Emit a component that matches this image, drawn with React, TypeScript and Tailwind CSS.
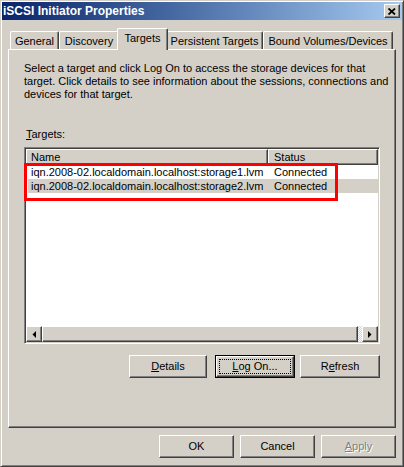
import React from "react";

const font = "font-['Liberation_Sans',Arial,sans-serif] text-[11px] leading-[13px] text-black";
const raised =
  "border border-t-white border-l-white border-r-[#404040] border-b-[#404040] shadow-[inset_-1px_-1px_#808080] bg-[#d4d0c8]";

const Btn = ({ children, className = "", disabled = false, def = false }: { children: React.ReactNode; className?: string; disabled?: boolean; def?: boolean }) => {
  if (def) {
    return (
      <div className={`h-[23px] border border-black ${className}`}>
        <div className={`${raised} h-full flex items-center justify-center p-[2px]`}>
          <div className="h-full w-full border border-dotted border-black flex items-center justify-center">{children}</div>
        </div>
      </div>
    );
  }
  return (
    <div
      className={`${raised} h-[23px] flex items-center justify-center ${disabled ? "text-[#808080] [text-shadow:1px_1px_0_#fff]" : ""} ${className}`}
    >
      {children}
    </div>
  );
};

const Tab = ({ label, width, active = false }: { label: string; width: string; active?: boolean }) => (
  <div
    className={`${width} flex justify-center border-t border-l border-t-white border-l-white border-r border-r-[#404040] rounded-t-[2px] shadow-[inset_-1px_0_#808080] bg-[#d4d0c8] ${
      active ? "h-[22px] -mx-[2px] -mb-[1px] z-10 pt-[3px]" : "h-[18px] pt-[3px]"
    }`}
  >
    {label}
  </div>
);

const Arrow = ({ dir }: { dir: "left" | "right" }) => (
  <div className={`${raised} w-[16px] h-[16px] flex items-center justify-center`}>
    <svg width="4" height="7" viewBox="0 0 4 7">
      {dir === "left" ? <polygon points="4,0 4,7 0.5,3.5" fill="#000" /> : <polygon points="0,0 0,7 3.5,3.5" fill="#000" />}
    </svg>
  </div>
);

export default function App() {
  return (
    <div
      className={`${font} w-[404px] h-[467px] bg-[#d4d0c8] border border-t-[#d4d0c8] border-l-[#d4d0c8] border-r-[#404040] border-b-[#404040] shadow-[inset_1px_1px_#fff,inset_-1px_-1px_#808080] p-[1px] flex flex-col`}
    >
      {/* title bar */}
      <div className="h-[18px] shrink-0 bg-gradient-to-r from-[#0a246a] to-[#a6caf0] flex items-center justify-between pl-[1px] pr-[2px]">
        <span className="font-bold text-white text-[12px] leading-[14px]">iSCSI Initiator Properties</span>
        <div className={`${raised} w-[16px] h-[14px] flex items-center justify-center`}>
          <svg width="8" height="7" viewBox="0 0 8 7">
            <path d="M0.5 0.5 L7 6.5 M7 0.5 L0.5 6.5" stroke="#000" strokeWidth="1.8" />
          </svg>
        </div>
      </div>

      {/* tabs */}
      <div className="px-[6px] pt-[8px]">
        <div className="flex items-end h-[21px] pl-[2px] relative">
          <Tab label="General" width="w-[49px]" />
          <Tab label="Discovery" width="w-[60px]" />
          <Tab label="Targets" width="w-[51px]" active />
          <Tab label="Persistent Targets" width="w-[97px]" />
          <Tab label="Bound Volumes/Devices" width="w-[130px]" />
        </div>

        <div className="h-[379px] w-[388px] border border-t-white border-l-white border-r-[#404040] border-b-[#404040] shadow-[inset_-1px_-1px_#808080] pt-[12px] pl-[15px]">
          <p className="w-[368px]">
            Select a target and click Log On to access the storage devices for that target. Click details to see information about the sessions, connections and devices for that target.
          </p>

          <div className="mt-[27px] pl-[2px]">
            <span className="underline">T</span>argets:
          </div>

          <div className="relative mt-[6px] w-[356px] h-[197px] border border-t-[#808080] border-l-[#808080] border-r-white border-b-white shadow-[inset_1px_1px_#404040,inset_-1px_-1px_#d4d0c8] p-[1px] flex flex-col bg-white">
            <div className="flex h-[16px] shrink-0">
              <div className={`${raised} w-[242px] pl-[4px] flex items-center`}>Name</div>
              <div className={`${raised} w-[110px] pl-[5px] flex items-center`}>Status</div>
            </div>
            <div className="flex-1 pl-[2px]">
              <div className="flex h-[14px] items-center">
                <div className="w-[240px] pl-[3px]">iqn.2008-02.localdomain.localhost:storage1.lvm</div>
                <div className="pl-[6px]">Connected</div>
              </div>
              <div className="flex h-[14px] items-center bg-[#d4d0c8]">
                <div className="w-[240px] pl-[3px]">iqn.2008-02.localdomain.localhost:storage2.lvm</div>
                <div className="pl-[6px]">Connected</div>
              </div>
            </div>
            <div className="flex h-[16px] shrink-0">
              <Arrow dir="left" />
              <div className={`${raised} w-[316px] h-[16px]`} />
              <div className="flex-1 bg-[repeating-conic-gradient(#d4d0c8_0%_25%,#ffffff_0%_50%)] bg-[length:2px_2px]" />
              <Arrow dir="right" />
            </div>

            <div className="absolute left-[-1px] top-[15px] w-[314px] h-[38px] border-[3px] border-[#ff0000]" />
          </div>

          <div className="flex mt-[11px] ml-[105px]">
            <Btn className="w-[78px]">
              <span><span className="underline">D</span>etails</span>
            </Btn>
            <Btn def className="w-[80px] ml-[8px]">
              <span><span className="underline">L</span>og On...</span>
            </Btn>
            <Btn className="w-[80px] ml-[5px]">
              <span>R<span className="underline">e</span>fresh</span>
            </Btn>
          </div>
        </div>
      </div>

      {/* dialog buttons */}
      <div className="flex justify-end gap-[6px] pr-[6px] mt-[7px]">
        <Btn className="w-[75px]">OK</Btn>
        <Btn className="w-[75px]">Cancel</Btn>
        <Btn disabled className="w-[75px]">
          <span><span className="underline">A</span>pply</span>
        </Btn>
      </div>
    </div>
  );
}
